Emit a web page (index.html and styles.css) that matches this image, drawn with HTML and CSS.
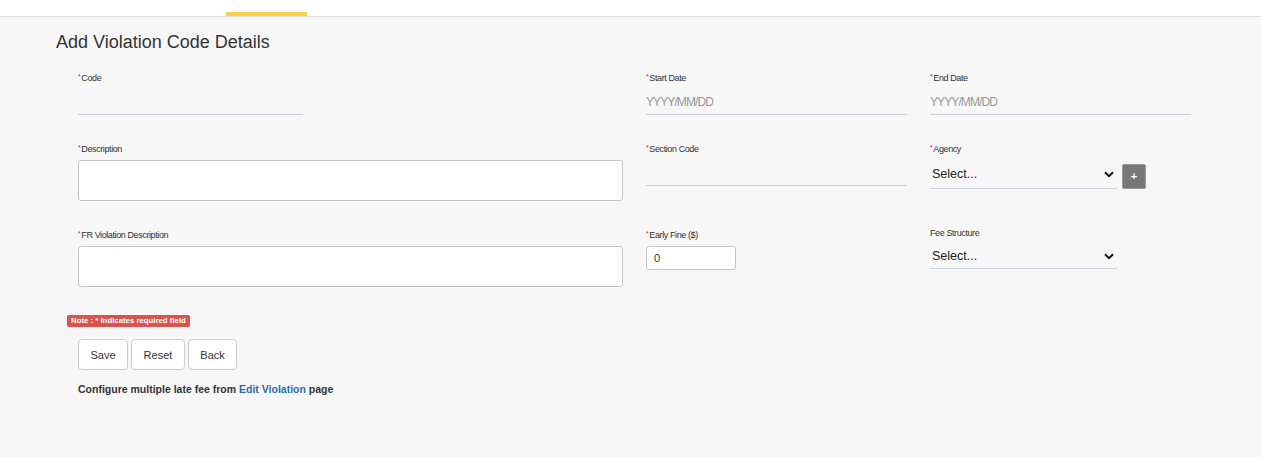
FILE: index.html
```html
<!DOCTYPE html>
<html lang="en">
<head>
  <meta charset="UTF-8">
  <title>Add Violation Code Details</title>
  <meta name="viewport" content="width=device-width, initial-scale=1">
  <link rel="stylesheet" href="styles.css">
</head>
<body>
  <nav class="tabs">
    <a href="#" class="tab"></a>
    <a href="#" class="tab"></a>
    <a href="#" class="tab active"></a>
  </nav>

  <main class="page">
    <h1 class="page-title">Add Violation Code Details</h1>

    <form class="form-grid" onsubmit="return false">
      <div class="field span-2">
        <label><sup>*</sup>Code</label>
        <input type="text" class="line-input code-input">
      </div>
      <div class="field">
        <label><sup>*</sup>Start Date</label>
        <input type="text" class="line-input" placeholder="YYYY/MM/DD">
      </div>
      <div class="field">
        <label><sup>*</sup>End Date</label>
        <input type="text" class="line-input" placeholder="YYYY/MM/DD">
      </div>

      <div class="field span-2">
        <label><sup>*</sup>Description</label>
        <textarea class="box-input"></textarea>
      </div>
      <div class="field">
        <label><sup>*</sup>Section Code</label>
        <input type="text" class="line-input">
      </div>
      <div class="field">
        <label><sup>*</sup>Agency</label>
        <div class="select-row">
          <div class="select-wrap">
            <select class="line-select">
              <option>Select...</option>
            </select>
            <svg class="chevron" viewBox="0 0 10 7" width="10" height="7"><path d="M1 1.2 L5 5.2 L9 1.2" fill="none" stroke="#111" stroke-width="2"/></svg>
          </div>
          <button type="button" class="add-btn">+</button>
        </div>
      </div>

      <div class="field span-2">
        <label><sup>*</sup>FR Violation Description</label>
        <textarea class="box-input"></textarea>
      </div>
      <div class="field">
        <label><sup>*</sup>Early Fine ($)</label>
        <input type="text" class="small-input" value="0">
      </div>
      <div class="field">
        <label>Fee Structure</label>
        <div class="select-wrap">
          <select class="line-select short">
            <option>Select...</option>
          </select>
          <svg class="chevron" viewBox="0 0 10 7" width="10" height="7"><path d="M1 1.2 L5 5.2 L9 1.2" fill="none" stroke="#111" stroke-width="2"/></svg>
        </div>
      </div>
    </form>

    <span class="note">Note : * Indicates required field</span>

    <div class="actions">
      <button type="button">Save</button>
      <button type="button">Reset</button>
      <button type="button">Back</button>
    </div>

    <p class="hint">Configure multiple late fee from <a href="#">Edit Violation</a> page</p>
  </main>
</body>
</html>
```

FILE: styles.css
```css
body {
  margin: 0;
  font-family: "Liberation Sans", Arial, sans-serif;
  background: #f7f7f7;
  color: #333;
  height: 457px;
  overflow: hidden;
}

/* top tabs (page is scrolled, only the bottom edge shows) */
.tabs {
  display: flex;
  height: 16px;
  background: #fff;
  border-bottom: 1px solid #dedede;
  padding-left: 64px;
}
.tab {
  display: block;
  box-sizing: border-box;
  height: 16px;
  width: 81px;
  border-bottom: 4px solid transparent;
}
.tab.active { border-bottom-color: #f7d046; }

.page { padding: 14px 0 0 56px; }
.page-title {
  margin: 0 0 18px;
  font-size: 18px;
  line-height: 22px;
  font-weight: normal;
  color: #333;
}

.form-grid {
  display: grid;
  grid-template-columns: repeat(4, 261px);
  column-gap: 23px;
  row-gap: 27px;
  margin-left: 22px;
}
.span-2 { grid-column: span 2; }
.field label {
  display: block;
  font-size: 9px;
  line-height: 11px;
  letter-spacing: -0.4px;
  color: #333;
  margin-bottom: 5px;
}
.field label sup {
  color: #e02020;
  font-size: 7px;
  vertical-align: 2px;
  margin-right: 1px;
}

.line-input {
  display: block;
  box-sizing: border-box;
  width: 100%;
  height: 26px;
  padding: 0;
  border: 0;
  border-bottom: 1px solid #c8d2df;
  background: transparent;
  font-family: inherit;
  font-size: 12px;
  outline: none;
}
.line-input::placeholder {
  color: #999;
  letter-spacing: -0.9px;
}
.code-input { width: 225px; }

.box-input {
  display: block;
  box-sizing: border-box;
  width: 100%;
  height: 41px;
  border: 1px solid #c4c4c4;
  border-radius: 3px;
  background: #fff;
  resize: none;
  margin-top: 1px;
}

.select-row {
  display: flex;
  align-items: flex-end;
  gap: 5px;
}
.select-wrap {
  position: relative;
  width: 187px;
}
.line-select {
  display: block;
  box-sizing: border-box;
  width: 100%;
  height: 29px;
  padding: 0 0 0 2px;
  border: 0;
  border-bottom: 1px solid #c8d2df;
  background: transparent;
  font-family: inherit;
  font-size: 12.5px;
  color: #222;
  appearance: none;
  -webkit-appearance: none;
  outline: none;
}
.line-select.short { height: 25px; margin-top: 1px; }
.chevron {
  position: absolute;
  right: 3px;
  top: 50%;
  margin-top: -4px;
  pointer-events: none;
}
.add-btn {
  box-sizing: border-box;
  width: 24px;
  height: 25px;
  padding: 0;
  border: 1px solid #999;
  border-radius: 2px;
  background: #777;
  color: #fff;
  font-size: 11px;
  font-weight: bold;
  line-height: 1;
}

.small-input {
  display: block;
  box-sizing: border-box;
  width: 90px;
  height: 24px;
  margin-top: 1px;
  padding: 0 7px;
  border: 1px solid #c4c4c4;
  border-radius: 3px;
  background: #fff;
  font-family: inherit;
  font-size: 11px;
  color: #333;
}

.note {
  display: inline-block;
  margin: 28px 0 0 11px;
  padding: 0 4px;
  height: 12px;
  line-height: 12px;
  font-size: 7.8px;
  font-weight: bold;
  color: #fff;
  background: #d9534f;
  border-radius: 2px;
}

.actions {
  display: flex;
  gap: 3px;
  margin: 12px 0 0 22px;
}
.actions button {
  box-sizing: border-box;
  height: 31px;
  padding: 0 11.5px;
  border: 1px solid #ccc;
  border-radius: 4px;
  background: #fff;
  font-family: inherit;
  font-size: 11px;
  color: #333;
}

.hint {
  margin: 13px 0 0 22px;
  font-size: 10.5px;
  line-height: 13px;
  font-weight: bold;
  color: #333;
}
.hint a {
  color: #2a6db0;
  text-decoration: none;
}
```
